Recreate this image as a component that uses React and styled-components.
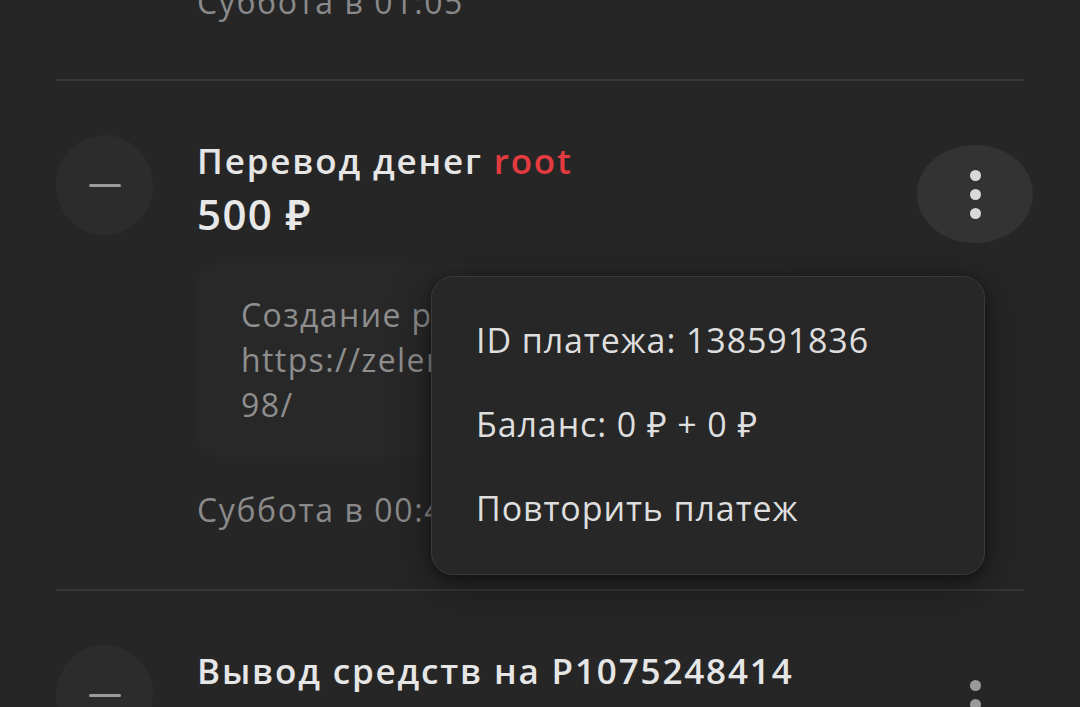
import styled, { createGlobalStyle } from "styled-components";

const GlobalStyle = createGlobalStyle`
  html, body {
    margin: 0;
    padding: 0;
    background: #262626;
    overflow: hidden;
  }
  body {
    font-family: "Open Sans", "Noto Sans", sans-serif;
    color: #e4e4e4;
  }
`;

const Page = styled.div`
  height: 707px;
  overflow: hidden;
  background: #262626;
  padding: 0 56px;
`;

const PrevTail = styled.div`
  margin-top: -20px;
  padding-bottom: 55px;
  padding-left: 141px;
`;

const Divider = styled.div`
  height: 2px;
  background: #363636;
`;

const Item = styled.div`
  position: relative;
  display: grid;
  grid-template-columns: 97px 1fr auto;
  column-gap: 44px;
  padding: 54px 0 57px;
`;

const Avatar = styled.div`
  width: 97px;
  height: 100px;
  border-radius: 50%;
  background: #2c2c2c;
  display: flex;
  align-items: center;
  justify-content: center;
`;

const Dash = styled.span`
  width: 32px;
  height: 3px;
  border-radius: 2px;
  background: #9c9c9c;
`;

const Content = styled.div`
  padding-top: 4px;
  min-width: 0;
`;

const Title = styled.div`
  font-size: 35px;
  line-height: 44px;
  font-weight: 600;
  letter-spacing: 1.85px;
  color: #e6e6e6;
  white-space: nowrap;
`;

const Accent = styled.span`
  color: #e33b40;
`;

const Amount = styled.div`
  margin-top: 6px;
  font-size: 42px;
  line-height: 50px;
  font-weight: 600;
  letter-spacing: 1.4px;
  color: #e8e8e8;
`;

const Bubble = styled.div`
  margin-top: 24px;
  width: 600px;
  padding: 29px 44px 30px;
  background: #282828;
  border-radius: 24px;
  font-size: 32px;
  line-height: 45px;
  letter-spacing: 1.4px;
  color: #8e8e8e;
  white-space: pre-line;
  box-sizing: border-box;
`;

const Time = styled.div`
  margin-top: ${(p) => (p.$first ? "0" : "31px")};
  font-size: 32px;
  line-height: 44px;
  letter-spacing: 1.6px;
  color: #8a8a8a;
  white-space: nowrap;
`;

const Kebab = styled.button`
  width: 116px;
  height: 98px;
  margin: 10px -9px 0 0;
  border: none;
  border-radius: 50%;
  background: ${(p) => (p.$pressed ? "#333333" : "transparent")};
  display: flex;
  flex-direction: column;
  align-items: center;
  justify-content: center;
  gap: 8px;
  padding: 0;
`;

const Dot = styled.span`
  width: 11px;
  height: 11px;
  border-radius: 50%;
  background: ${(p) => (p.$dim ? "#9a9a9a" : "#d9d9d9")};
`;

const Menu = styled.div`
  position: absolute;
  top: 195px;
  right: 39px;
  width: 554px;
  padding: 21px 0 24px;
  box-sizing: border-box;
  background: #272727;
  border: 1.5px solid #3a3a3a;
  border-radius: 22px;
  box-shadow: 0 10px 40px rgba(0, 0, 0, 0.45), 0 2px 8px rgba(0, 0, 0, 0.3);
  z-index: 5;
`;

const MenuRow = styled.div`
  height: 84px;
  display: flex;
  align-items: center;
  padding-left: 44px;
  font-size: 34px;
  letter-spacing: 0.9px;
  color: #dedede;
  white-space: nowrap;
`;

function KebabButton({ pressed, dim }) {
  return (
    <Kebab $pressed={pressed}>
      <Dot $dim={dim} />
      <Dot $dim={dim} />
      <Dot $dim={dim} />
    </Kebab>
  );
}

export default function App() {
  return (
    <>
      <GlobalStyle />
      <Page>
        <PrevTail>
          <Time $first>Суббота в 01:05</Time>
        </PrevTail>
        <Divider />
        <Item>
          <Avatar>
            <Dash />
          </Avatar>
          <Content>
            <Title>
              Перевод денег <Accent>root</Accent>
            </Title>
            <Amount>500 ₽</Amount>
            <Bubble>
              {"Создание резерва для\nhttps://zelenka.guru/threads/58120\n98/"}
            </Bubble>
            <Time>Суббота в 00:42</Time>
          </Content>
          <KebabButton pressed />
          <Menu>
            <MenuRow>ID платежа: 138591836</MenuRow>
            <MenuRow>Баланс: 0 ₽ + 0 ₽</MenuRow>
            <MenuRow>Повторить платеж</MenuRow>
          </Menu>
        </Item>
        <Divider />
        <Item>
          <Avatar>
            <Dash />
          </Avatar>
          <Content>
            <Title>Вывод средств на P1075248414</Title>
            <Amount>300 ₽</Amount>
          </Content>
          <KebabButton dim />
        </Item>
      </Page>
    </>
  );
}
